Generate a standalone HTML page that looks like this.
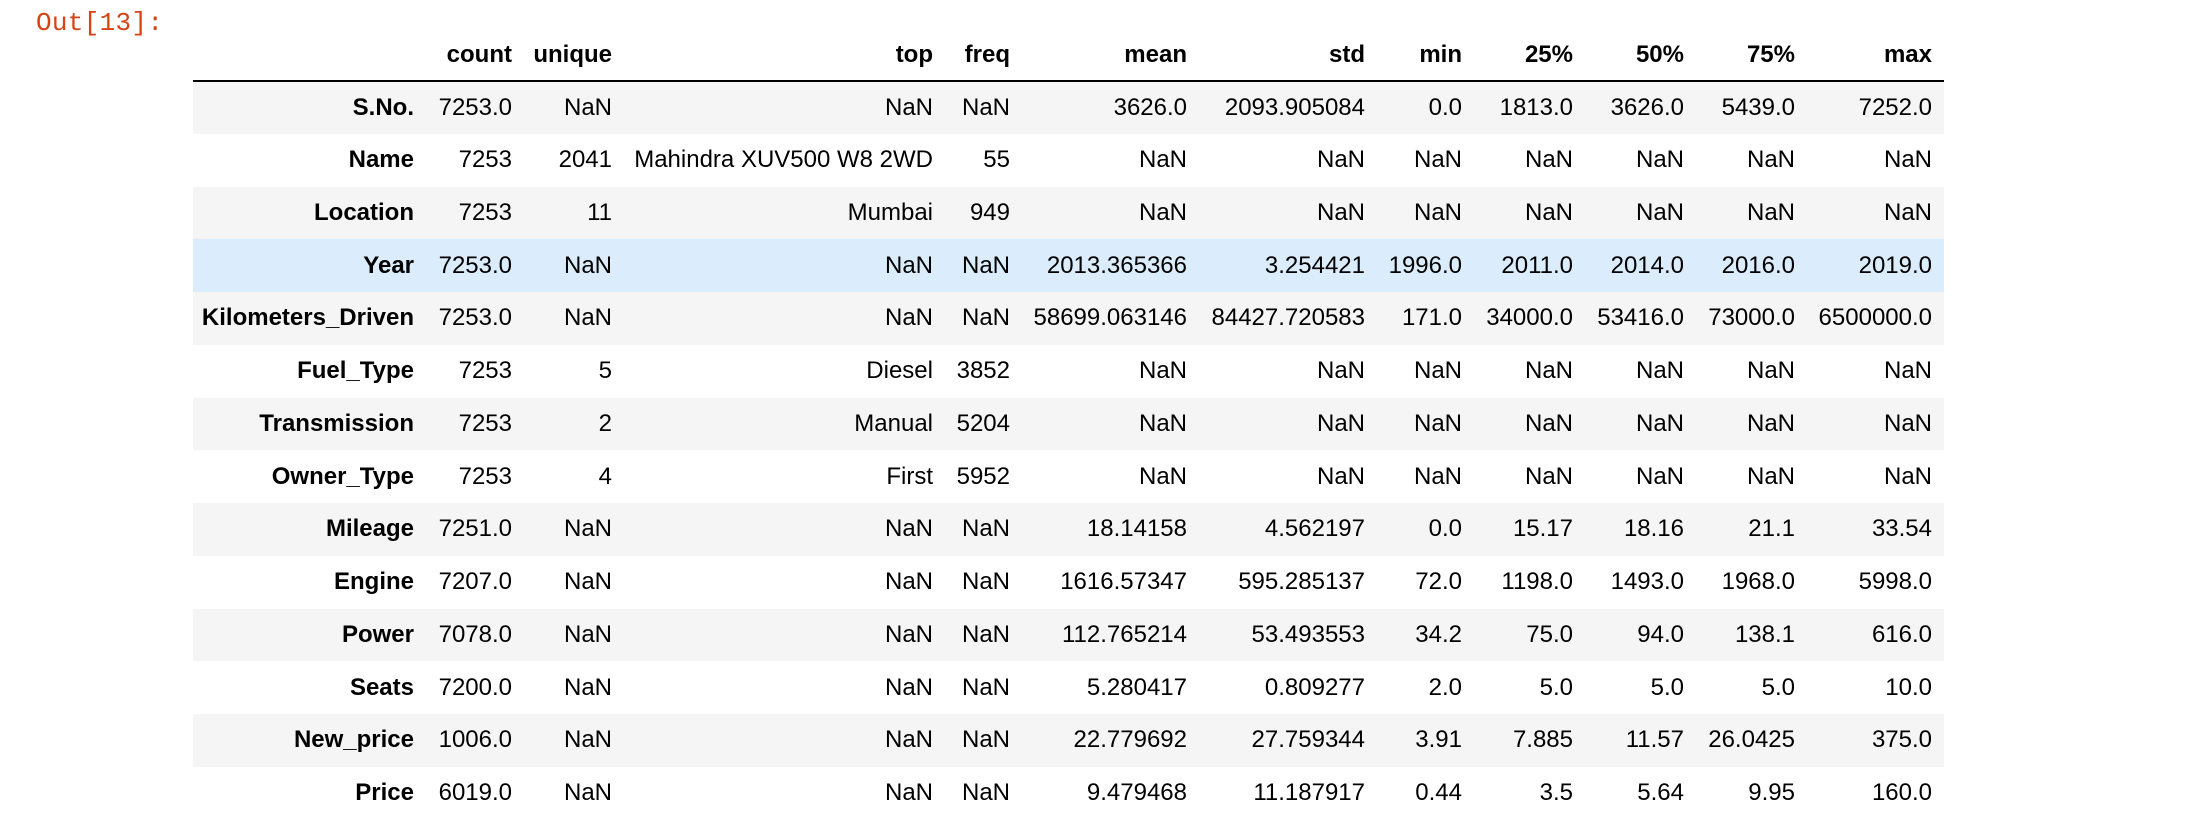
<!DOCTYPE html>
<html><head><meta charset="utf-8"><style>
html,body{margin:0;padding:0;background:#fff;width:2202px;height:826px;overflow:hidden}
.out{position:absolute;left:36px;top:6px;font-family:"Liberation Mono",monospace;font-size:26px;color:#d84315;line-height:34px;letter-spacing:0.3px}
table{position:absolute;left:193px;top:29px;border-collapse:collapse;table-layout:fixed;font-family:"Liberation Sans",Arial,sans-serif;font-size:24px;color:#000}
td,th{padding:0;text-align:right;white-space:nowrap;vertical-align:middle}
thead th{height:51px;border-bottom:2px solid #000;font-weight:bold}
tbody tr{height:52.75px}
tbody th{font-weight:bold}
tbody tr:nth-child(odd){background:#f5f5f5}
tbody tr.hl{background:#dbedfc}
td.l,th.l{padding-right:12px}
</style></head><body>
<div class="out">Out[13]:</div>
<table>
<colgroup><col style="width:221px"><col style="width:98px"><col style="width:100px"><col style="width:321px"><col style="width:77px"><col style="width:177px"><col style="width:178px"><col style="width:97px"><col style="width:111px"><col style="width:111px"><col style="width:111px"><col style="width:149px"></colgroup>
<thead><tr><th></th><th>count</th><th>unique</th><th>top</th><th>freq</th><th>mean</th><th>std</th><th>min</th><th>25%</th><th>50%</th><th>75%</th><th class="l">max</th></tr></thead>
<tbody>
<tr><th>S.No.</th><td>7253.0</td><td>NaN</td><td>NaN</td><td>NaN</td><td>3626.0</td><td>2093.905084</td><td>0.0</td><td>1813.0</td><td>3626.0</td><td>5439.0</td><td class="l">7252.0</td></tr>
<tr><th>Name</th><td>7253</td><td>2041</td><td>Mahindra XUV500 W8 2WD</td><td>55</td><td>NaN</td><td>NaN</td><td>NaN</td><td>NaN</td><td>NaN</td><td>NaN</td><td class="l">NaN</td></tr>
<tr><th>Location</th><td>7253</td><td>11</td><td>Mumbai</td><td>949</td><td>NaN</td><td>NaN</td><td>NaN</td><td>NaN</td><td>NaN</td><td>NaN</td><td class="l">NaN</td></tr>
<tr class="hl"><th>Year</th><td>7253.0</td><td>NaN</td><td>NaN</td><td>NaN</td><td>2013.365366</td><td>3.254421</td><td>1996.0</td><td>2011.0</td><td>2014.0</td><td>2016.0</td><td class="l">2019.0</td></tr>
<tr><th>Kilometers_Driven</th><td>7253.0</td><td>NaN</td><td>NaN</td><td>NaN</td><td>58699.063146</td><td>84427.720583</td><td>171.0</td><td>34000.0</td><td>53416.0</td><td>73000.0</td><td class="l">6500000.0</td></tr>
<tr><th>Fuel_Type</th><td>7253</td><td>5</td><td>Diesel</td><td>3852</td><td>NaN</td><td>NaN</td><td>NaN</td><td>NaN</td><td>NaN</td><td>NaN</td><td class="l">NaN</td></tr>
<tr><th>Transmission</th><td>7253</td><td>2</td><td>Manual</td><td>5204</td><td>NaN</td><td>NaN</td><td>NaN</td><td>NaN</td><td>NaN</td><td>NaN</td><td class="l">NaN</td></tr>
<tr><th>Owner_Type</th><td>7253</td><td>4</td><td>First</td><td>5952</td><td>NaN</td><td>NaN</td><td>NaN</td><td>NaN</td><td>NaN</td><td>NaN</td><td class="l">NaN</td></tr>
<tr><th>Mileage</th><td>7251.0</td><td>NaN</td><td>NaN</td><td>NaN</td><td>18.14158</td><td>4.562197</td><td>0.0</td><td>15.17</td><td>18.16</td><td>21.1</td><td class="l">33.54</td></tr>
<tr><th>Engine</th><td>7207.0</td><td>NaN</td><td>NaN</td><td>NaN</td><td>1616.57347</td><td>595.285137</td><td>72.0</td><td>1198.0</td><td>1493.0</td><td>1968.0</td><td class="l">5998.0</td></tr>
<tr><th>Power</th><td>7078.0</td><td>NaN</td><td>NaN</td><td>NaN</td><td>112.765214</td><td>53.493553</td><td>34.2</td><td>75.0</td><td>94.0</td><td>138.1</td><td class="l">616.0</td></tr>
<tr><th>Seats</th><td>7200.0</td><td>NaN</td><td>NaN</td><td>NaN</td><td>5.280417</td><td>0.809277</td><td>2.0</td><td>5.0</td><td>5.0</td><td>5.0</td><td class="l">10.0</td></tr>
<tr><th>New_price</th><td>1006.0</td><td>NaN</td><td>NaN</td><td>NaN</td><td>22.779692</td><td>27.759344</td><td>3.91</td><td>7.885</td><td>11.57</td><td>26.0425</td><td class="l">375.0</td></tr>
<tr><th>Price</th><td>6019.0</td><td>NaN</td><td>NaN</td><td>NaN</td><td>9.479468</td><td>11.187917</td><td>0.44</td><td>3.5</td><td>5.64</td><td>9.95</td><td class="l">160.0</td></tr>
</tbody></table>
</body></html>
